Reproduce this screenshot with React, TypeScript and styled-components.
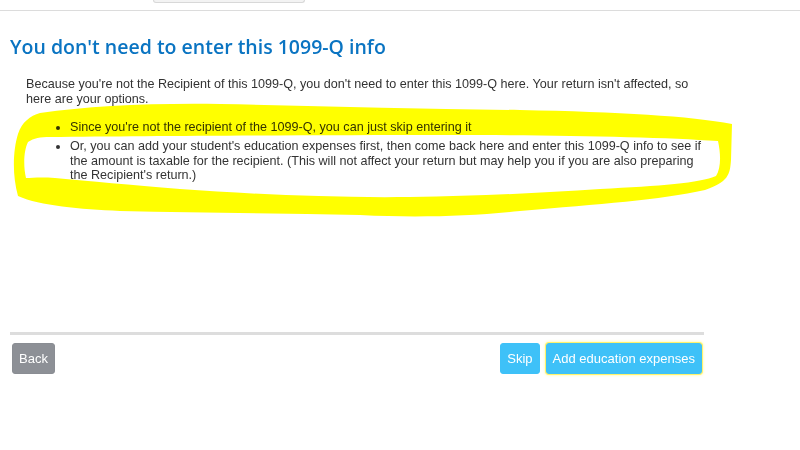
import React from 'react';
import styled, { createGlobalStyle } from 'styled-components';

const GlobalStyle = createGlobalStyle`
  html, body {
    margin: 0;
    padding: 0;
    background: #fff;
  }
  body {
    font-family: "Liberation Sans", Arial, sans-serif;
    color: #333;
  }
`;

const Screen = styled.div`
  position: relative;
  width: 800px;
  height: 450px;
  overflow: hidden;
`;

const TopBar = styled.div`
  height: 11px;
  box-sizing: border-box;
  border-bottom: 1px solid #dcdcdc;
  padding-left: 153px;
`;

const TabEdge = styled.div`
  width: 152px;
  height: 3px;
  box-sizing: border-box;
  background: #f3f3f3;
  border: 1px solid #d8d8d8;
  border-top: none;
  border-radius: 0 0 10px 10px;
`;

const Page = styled.div`
  width: 694px;
  padding: 0 10px;
`;

const Title = styled.h1`
  margin: 24px 0 0;
  font-family: "Open Sans", "Noto Sans", sans-serif;
  font-size: 19.5px;
  font-weight: 600;
  line-height: 24px;
  color: #0a74c2;
`;

const Content = styled.div`
  width: 682px;
  height: 255px;
  padding: 18px 0 0 16px;
  font-size: 12.6px;
  line-height: 14.5px;
  color: #333;
`;

const Intro = styled.p`
  margin: 0;
`;

const Options = styled.ul`
  margin: 14px 0 0;
  padding-left: 44px;
  list-style: disc;
`;

const Option = styled.li`
  margin-bottom: 4.5px;
`;

const Divider = styled.div`
  height: 3px;
  background: #dddddd;
`;

const ButtonRow = styled.div`
  display: flex;
  align-items: center;
  justify-content: space-between;
  margin-top: 8px;
  padding: 0 2px;
`;

const Group = styled.div`
  display: flex;
  gap: 6px;
`;

const Button = styled.button<{ $tone: 'grey' | 'blue'; $focused?: boolean }>`
  height: 31px;
  padding: 0 6px;
  border: 1px solid ${(p) => (p.$tone === 'grey' ? '#8a8d93' : '#3ec1f8')};
  border-radius: 3px;
  background: ${(p) => (p.$tone === 'grey' ? '#8d9096' : '#3ec1f8')};
  color: #fff;
  font-family: "Liberation Sans", Arial, sans-serif;
  font-size: 13px;
  cursor: pointer;
  box-shadow: ${(p) => (p.$focused ? '0 0 0 1px #fff36b, 0 0 3px 1px #fff8a0' : 'none')};
`;

const Highlight = styled.svg`
  position: absolute;
  left: 0;
  top: 0;
  pointer-events: none;
  mix-blend-mode: multiply;
`;

const outer =
  'M40 113 C90 106 150 103 220 104 C320 106 420 109 520 110 C620 112 690 116 732 124 L731 160 C730 175 728 182 705 190 C660 200 600 204 520 211 C470 216 420 218 360 215 C280 213 200 213 120 211 C80 209 40 206 18 196 C12 175 13 150 18 134 C22 122 30 116 40 113 Z';
const inner =
  'M50 137 C150 136 300 135 450 135 C560 135 660 137 718 141 C721 155 721 168 716 176 C700 183 660 186 600 189 C540 193 480 196 410 197 C330 198 250 194 180 189 C130 185 90 181 55 178 C40 177 32 178 26 178 C23 165 24 150 28 142 C34 138 40 137 50 137 Z';

const App: React.FC = () => {
  return (
    <Screen>
      <GlobalStyle />
      <TopBar>
        <TabEdge />
      </TopBar>
      <Page>
        <Title>You don't need to enter this 1099-Q info</Title>
        <Content>
          <Intro>
            Because you're not the Recipient of this 1099-Q, you don't need to enter this 1099-Q here. Your return
            isn't affected, so here are your options.
          </Intro>
          <Options>
            <Option>Since you're not the recipient of the 1099-Q, you can just skip entering it</Option>
            <Option>
              Or, you can add your student's education expenses first, then come back here and enter this 1099-Q info
              to see if the amount is taxable for the recipient. (This will not affect your return but may help you if
              you are also preparing the Recipient's return.)
            </Option>
          </Options>
        </Content>
        <Divider />
        <ButtonRow>
          <Button $tone="grey">Back</Button>
          <Group>
            <Button $tone="blue">Skip</Button>
            <Button $tone="blue" $focused>
              Add education expenses
            </Button>
          </Group>
        </ButtonRow>
      </Page>
      <Highlight width="800" height="450" viewBox="0 0 800 450">
        <path d={`${outer} ${inner}`} fill="#ffff00" fillRule="evenodd" />
      </Highlight>
    </Screen>
  );
};

export default App;
